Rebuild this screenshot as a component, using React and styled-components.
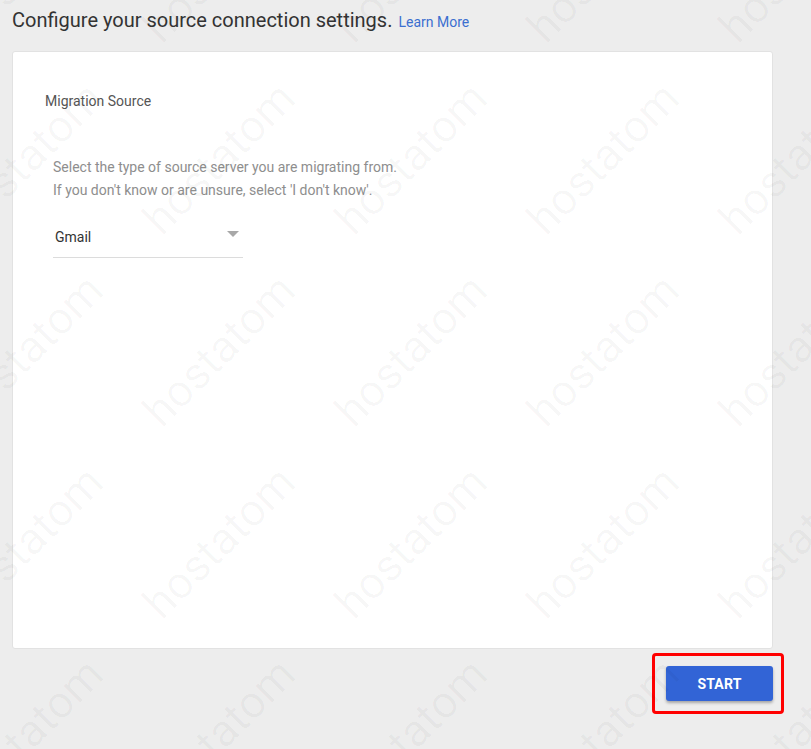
import styled, { createGlobalStyle } from "styled-components";

const GlobalStyle = createGlobalStyle`
  html, body {
    margin: 0;
    padding: 0;
    background: #ededed;
    font-family: Roboto, "Liberation Sans", Arial, sans-serif;
  }
`;

const marks = [];
for (let row = 0; row < 5; row++) {
  for (let col = 0; col < 5; col++) {
    marks.push({ x: 27 + col * 192, y: -34 + row * 192 });
  }
}

function App() {
  return (
    <>
      <GlobalStyle />
      <Page>
        <Header>
          <Title>Configure your source connection settings.</Title>
          <LearnMore href="#">Learn More</LearnMore>
        </Header>

        <Card>
          <SectionLabel>Migration Source</SectionLabel>
          <Description>
            <p>Select the type of source server you are migrating from.</p>
            <p>If you don't know or are unsure, select 'I don't know'.</p>
          </Description>
          <Select>
            <span>Gmail</span>
            <Caret />
          </Select>
        </Card>

        <Footer>
          <Highlight>
            <StartButton>START</StartButton>
          </Highlight>
        </Footer>
      </Page>

      {/* watermark */}
      <Watermarks>
        {marks.map((m, i) => (
          <Mark key={i} $x={m.x} $y={m.y}>
            hostatom
          </Mark>
        ))}
      </Watermarks>
    </>
  );
}

export default App;

const Page = styled.div`
  width: 761px;
  padding: 0 12px;
  min-height: 749px;
  box-sizing: content-box;
`;

const Header = styled.div`
  display: flex;
  align-items: baseline;
  gap: 6px;
  height: 51px;
  padding-top: 7px;
  box-sizing: border-box;
`;

const Title = styled.h1`
  margin: 0;
  font-size: 20px;
  font-weight: 400;
  line-height: 26px;
  color: #333;
`;

const LearnMore = styled.a`
  font-size: 14px;
  color: #3b6fd0;
  text-decoration: none;
`;

const Card = styled.div`
  height: 598px;
  box-sizing: border-box;
  background: #fff;
  border: 1px solid #e2e2e2;
  border-radius: 3px;
  padding: 40px 32px 0;
`;

const SectionLabel = styled.div`
  font-size: 14px;
  line-height: 18px;
  color: #555;
`;

const Description = styled.div`
  margin-top: 46px;
  padding-left: 8px;

  p {
    margin: 0;
    font-size: 14px;
    line-height: 23px;
    color: #8e8e8e;
  }
`;

const Select = styled.div`
  display: flex;
  align-items: center;
  justify-content: space-between;
  width: 190px;
  height: 42px;
  margin: 14px 0 0 8px;
  padding: 0 4px 0 2px;
  box-sizing: border-box;
  border-bottom: 1px solid #dcdcdc;
  font-size: 14px;
  color: #333;
`;

const Caret = styled.span`
  width: 0;
  height: 0;
  margin-top: -6px;
  border-left: 6px solid transparent;
  border-right: 6px solid transparent;
  border-top: 6px solid #a8a8a8;
`;

const Footer = styled.div`
  display: flex;
  justify-content: flex-end;
  margin-top: 4px;
`;

const Highlight = styled.div`
  border: 3px solid #ff0000;
  border-radius: 4px;
  padding: 10px 8px 10px 11px;
  margin-right: -11px;
`;

const StartButton = styled.button`
  display: block;
  width: 107px;
  height: 35px;
  border: none;
  border-radius: 3px;
  background: #3264d6;
  color: #fff;
  font-family: Roboto, "Liberation Sans", Arial, sans-serif;
  font-size: 14px;
  font-weight: 700;
  letter-spacing: 0.2px;
  box-shadow: 0 2px 3px rgba(0, 0, 0, 0.3);
  cursor: pointer;
`;

const Watermarks = styled.div`
  position: absolute;
  inset: 0;
  height: 749px;
  overflow: hidden;
  pointer-events: none;
`;

const Mark = styled.div`
  position: absolute;
  left: ${({ $x }) => $x}px;
  top: ${({ $y }) => $y}px;
  transform: translate(-50%, -50%) rotate(-45deg);
  font-family: Roboto, "Liberation Sans", Arial, sans-serif;
  font-size: 45px;
  color: rgba(0, 0, 0, 0.032);
  white-space: nowrap;
`;
